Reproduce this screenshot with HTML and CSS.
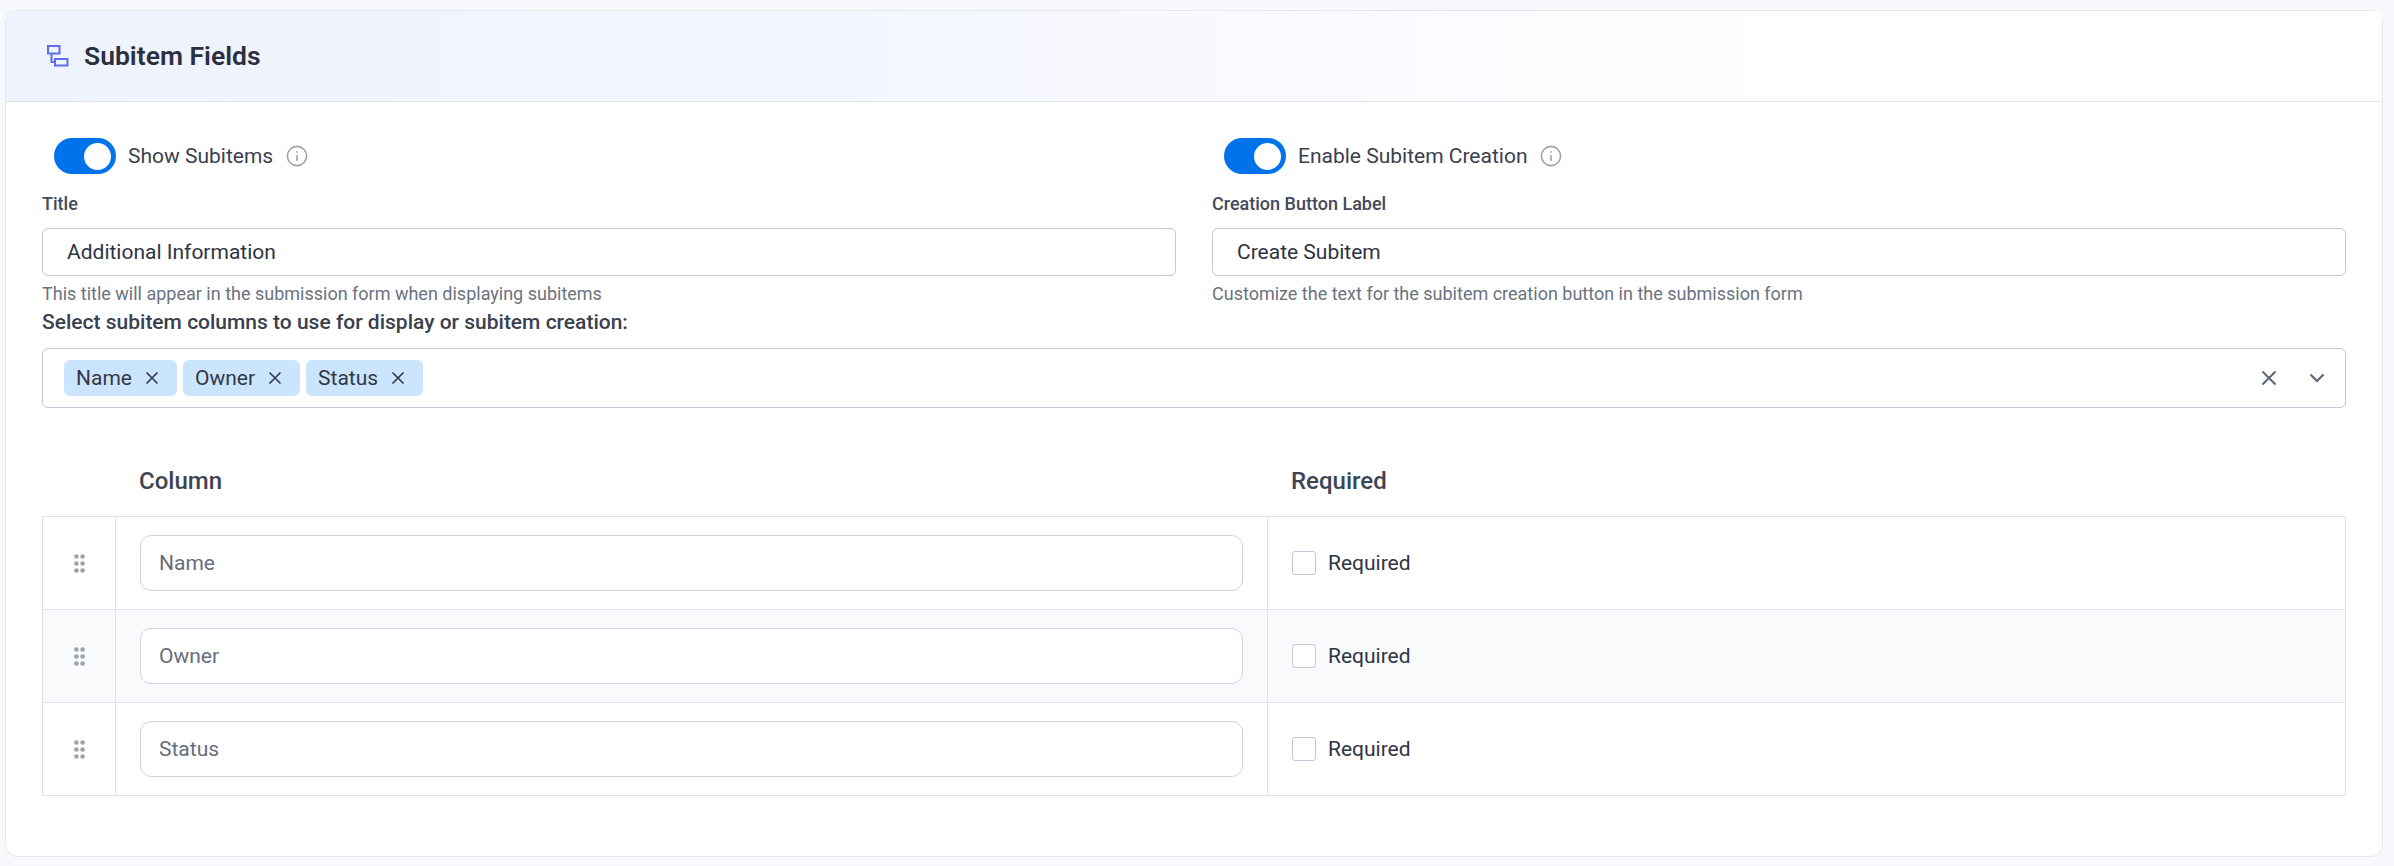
FILE: index.html
```html
<!DOCTYPE html>
<html lang="en">
<head>
<meta charset="utf-8">
<title>Subitem Fields</title>
<link rel="stylesheet" href="styles.css">
</head>
<body>
<section class="card">
  <header class="card-head">
    <svg class="head-icon" width="22" height="22" viewBox="0 0 22 22" fill="none" stroke="#5b6ef0" stroke-width="2">
      <rect x="1" y="1" width="11.5" height="7.5"/>
      <rect x="8" y="14" width="12.5" height="6.5"/>
      <path d="M4.5 8.5v8.5H8"/>
    </svg>
    <h2 class="card-title">Subitem Fields</h2>
  </header>
  <div class="card-body">
    <div class="fields">
      <div class="field">
        <div class="switch-row">
          <span class="toggle"><span class="knob"></span></span>
          <span class="switch-label">Show Subitems</span>
          <svg class="info" width="22" height="22" viewBox="0 0 22 22" fill="none" stroke="#9ca3af" stroke-width="1.6"><circle cx="11" cy="11" r="9.6"/><path d="M11 10v6"/><path d="M11 6.2v1.6"/></svg>
        </div>
        <div class="field-label">Title</div>
        <div class="text-box">Additional Information</div>
        <div class="hint">This title will appear in the submission form when displaying subitems</div>
      </div>
      <div class="field">
        <div class="switch-row">
          <span class="toggle"><span class="knob"></span></span>
          <span class="switch-label">Enable Subitem Creation</span>
          <svg class="info" width="22" height="22" viewBox="0 0 22 22" fill="none" stroke="#9ca3af" stroke-width="1.6"><circle cx="11" cy="11" r="9.6"/><path d="M11 10v6"/><path d="M11 6.2v1.6"/></svg>
        </div>
        <div class="field-label">Creation Button Label</div>
        <div class="text-box">Create Subitem</div>
        <div class="hint">Customize the text for the subitem creation button in the submission form</div>
      </div>
    </div>

    <div class="select-label">Select subitem columns to use for display or subitem creation:</div>
    <div class="multi-select">
      <div class="tags">
        <span class="tag">Name<svg class="tag-x" width="14" height="14" viewBox="0 0 14 14" stroke="#323846" stroke-width="1.6" fill="none"><path d="M1.5 1.5l11 11M12.5 1.5l-11 11"/></svg></span>
        <span class="tag">Owner<svg class="tag-x" width="14" height="14" viewBox="0 0 14 14" stroke="#323846" stroke-width="1.6" fill="none"><path d="M1.5 1.5l11 11M12.5 1.5l-11 11"/></svg></span>
        <span class="tag">Status<svg class="tag-x" width="14" height="14" viewBox="0 0 14 14" stroke="#323846" stroke-width="1.6" fill="none"><path d="M1.5 1.5l11 11M12.5 1.5l-11 11"/></svg></span>
      </div>
      <svg class="clear-x" width="16" height="16" viewBox="0 0 16 16" stroke="#5f6672" stroke-width="2" fill="none"><path d="M1.5 1.5l13 13M14.5 1.5l-13 13"/></svg>
      <svg class="chevron" width="16" height="10" viewBox="0 0 16 10" stroke="#5f6672" stroke-width="2.2" fill="none"><path d="M1.5 1.5L8 8l6.5-6.5"/></svg>
    </div>

    <div class="columns-head">
      <div class="col-name">Column</div>
      <div class="col-req">Required</div>
    </div>
    <div class="col-table">
      <div class="col-row">
        <div class="cell-drag"><svg width="11" height="19" viewBox="0 0 11 19" fill="#9ca3af"><circle cx="2.4" cy="2.5" r="2.3"/><circle cx="8.6" cy="2.5" r="2.3"/><circle cx="2.4" cy="9.5" r="2.3"/><circle cx="8.6" cy="9.5" r="2.3"/><circle cx="2.4" cy="16.5" r="2.3"/><circle cx="8.6" cy="16.5" r="2.3"/></svg></div>
        <div class="cell-input"><div class="row-box">Name</div></div>
        <div class="cell-check"><span class="checkbox"></span><span class="check-label">Required</span></div>
      </div>
      <div class="col-row alt">
        <div class="cell-drag"><svg width="11" height="19" viewBox="0 0 11 19" fill="#9ca3af"><circle cx="2.4" cy="2.5" r="2.3"/><circle cx="8.6" cy="2.5" r="2.3"/><circle cx="2.4" cy="9.5" r="2.3"/><circle cx="8.6" cy="9.5" r="2.3"/><circle cx="2.4" cy="16.5" r="2.3"/><circle cx="8.6" cy="16.5" r="2.3"/></svg></div>
        <div class="cell-input"><div class="row-box">Owner</div></div>
        <div class="cell-check"><span class="checkbox"></span><span class="check-label">Required</span></div>
      </div>
      <div class="col-row">
        <div class="cell-drag"><svg width="11" height="19" viewBox="0 0 11 19" fill="#9ca3af"><circle cx="2.4" cy="2.5" r="2.3"/><circle cx="8.6" cy="2.5" r="2.3"/><circle cx="2.4" cy="9.5" r="2.3"/><circle cx="8.6" cy="9.5" r="2.3"/><circle cx="2.4" cy="16.5" r="2.3"/><circle cx="8.6" cy="16.5" r="2.3"/></svg></div>
        <div class="cell-input"><div class="row-box">Status</div></div>
        <div class="cell-check"><span class="checkbox"></span><span class="check-label">Required</span></div>
      </div>
    </div>
  </div>
</section>
</body>
</html>
```

FILE: styles.css
```css
* { box-sizing: border-box; }
html, body { height: 100%; }
body {
  margin: 0;
  padding: 10px 11px 9px 5px;
  background: #f8f9fc;
  font-family: Roboto, "Liberation Sans", sans-serif;
  color: #2b3040;
  overflow: hidden;
}
.card {
  height: 847px;
  background: #fff;
  border: 1px solid #e4e6ec;
  border-radius: 12px;
}
.card-head {
  height: 91px;
  display: flex;
  align-items: center;
  gap: 15px;
  padding-left: 41px;
  background: linear-gradient(90deg, #eff3fe 0%, #f3f6fe 35%, #ffffff 75%);
  border-bottom: 1px solid #e4e6ec;
}
.head-icon { flex: none; margin-top: 0; }
.card-title {
  margin: 0;
  font-size: 26.5px;
  line-height: 32px;
  font-weight: 600;
  color: #2b3040;
}
.card-body { padding: 36px 36px 0; }
.fields {
  display: grid;
  grid-template-columns: 1134px 1134px;
  column-gap: 36px;
}
.switch-row {
  display: flex;
  align-items: center;
  height: 36px;
  padding-left: 12px;
}
.toggle {
  width: 62px;
  height: 36px;
  border-radius: 18px;
  background: #0073ea;
  display: flex;
  align-items: center;
  justify-content: flex-end;
  padding-right: 5px;
  flex: none;
}
.knob { width: 27px; height: 27px; border-radius: 50%; background: #fff; }
.switch-label { margin-left: 12px; font-size: 21px; line-height: 28px; color: #3a404e; }
.info { margin-left: 13px; flex: none; }
.field-label {
  margin-top: 19px;
  font-size: 18px;
  line-height: 22px;
  font-weight: 500;
  color: #434a59;
}
.text-box {
  margin-top: 13px;
  height: 48px;
  border: 1px solid #c3c6d4;
  border-radius: 6px;
  padding-left: 24px;
  display: flex;
  align-items: center;
  font-size: 21px;
  color: #2f3443;
}
.hint {
  margin-top: 7px;
  font-size: 18px;
  line-height: 22px;
  color: #6b7280;
}
.select-label {
  margin-top: 4px;
  font-size: 21px;
  line-height: 26px;
  font-weight: 500;
  color: #3a404e;
}
.multi-select {
  margin-top: 13px;
  height: 60px;
  border: 1px solid #c3c6d4;
  border-radius: 6px;
  display: flex;
  align-items: center;
  padding-left: 21px;
}
.tags { display: flex; gap: 6px; flex: 1; }
.tag {
  height: 36px;
  border-radius: 6px;
  background: #cce5ff;
  display: flex;
  align-items: center;
  padding: 0 18px 0 12px;
  font-size: 21px;
  color: #323846;
}
.tag-x { margin-left: 13px; flex: none; }
.clear-x { flex: none; }
.chevron { flex: none; margin-left: 32px; margin-right: 20px; }
.columns-head {
  margin-top: 55px;
  height: 53px;
  display: grid;
  grid-template-columns: 97px 1152px 1fr;
  font-size: 24px;
  line-height: 36px;
  font-weight: 500;
  color: #3d4554;
}
.col-name { grid-column: 2; }
.col-req { grid-column: 3; }
.col-table { border: 1px solid #e0e2e8; border-width: 1px 1px 0 1px; }
.col-row {
  height: 93px;
  display: grid;
  grid-template-columns: 73px 1152px 1fr;
  border-bottom: 1px solid #e0e2e8;
}
.col-row.alt { background: #f9fafc; }
.cell-drag {
  display: flex;
  align-items: center;
  justify-content: center;
  border-right: 1px solid #e0e2e8;
}
.cell-input {
  display: flex;
  align-items: center;
  padding: 0 24px;
  border-right: 1px solid #e0e2e8;
}
.row-box {
  width: 100%;
  height: 56px;
  background: #fff;
  border: 1px solid #d0d3de;
  border-radius: 11px;
  padding-left: 18px;
  display: flex;
  align-items: center;
  font-size: 21px;
  color: #666d7b;
}
.cell-check { display: flex; align-items: center; padding-left: 24px; }
.checkbox {
  width: 24px;
  height: 24px;
  background: #fff;
  border: 1px solid #c3c6d4;
  border-radius: 3px;
  flex: none;
}
.check-label { margin-left: 12px; font-size: 21px; color: #2f3443; }
```
